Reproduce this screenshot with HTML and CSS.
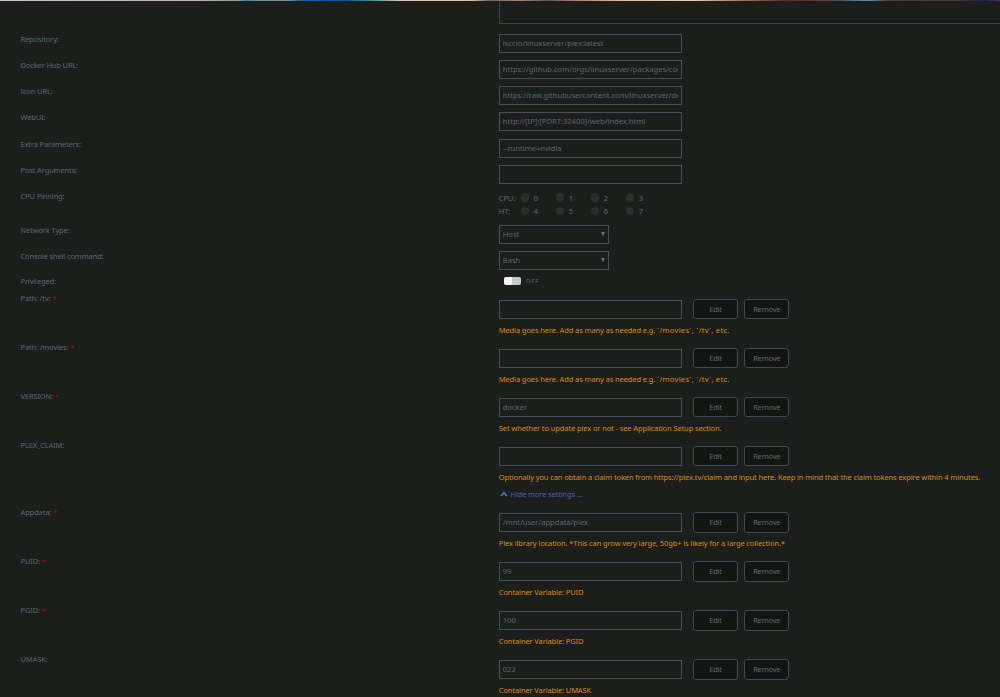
FILE: index.html
```html
<!DOCTYPE html>
<html lang="en">
<head>
  <meta charset="UTF-8">
  <meta name="viewport" content="width=device-width, initial-scale=1.0">
  <title>Update Container</title>
  <link rel="stylesheet" href="styles.css">
</head>
<body>
  <div class="banner"></div>
  <form class="settings">
    <div class="overview"><div class="overview-box"></div></div>

    <div class="row">
      <label>Repository:</label>
      <input type="text" value="lscr.io/linuxserver/plex:latest">
    </div>
    <div class="row">
      <label>Docker Hub URL:</label>
      <input type="text" value="https://github.com/orgs/linuxserver/packages/container/package/plex">
    </div>
    <div class="row">
      <label>Icon URL:</label>
      <input type="text" value="https://raw.githubusercontent.com/linuxserver/docker-templates/master/plex.png">
    </div>
    <div class="row">
      <label>WebUI:</label>
      <input type="text" value="http://[IP]:[PORT:32400]/web/index.html">
    </div>
    <div class="row">
      <label>Extra Parameters:</label>
      <input type="text" value="--runtime=nvidia">
    </div>
    <div class="row">
      <label>Post Arguments:</label>
      <input type="text" value="">
    </div>

    <div class="row cpu-row">
      <label>CPU Pinning:</label>
      <div class="cpus">
        <span>CPU:</span><i class="check"></i><span>0</span><i class="check"></i><span>1</span><i class="check"></i><span>2</span><i class="check"></i><span>3</span>
        <span>HT:</span><i class="check"></i><span>4</span><i class="check"></i><span>5</span><i class="check"></i><span>6</span><i class="check"></i><span>7</span>
      </div>
    </div>

    <div class="row select-row">
      <label>Network Type:</label>
      <div class="select"><span>Host</span><i class="arrow"></i></div>
    </div>
    <div class="row select-row">
      <label>Console shell command:</label>
      <div class="select"><span>Bash</span><i class="arrow"></i></div>
    </div>
    <div class="row toggle-row">
      <label>Privileged:</label>
      <div class="toggle"><i class="switch"></i><span>OFF</span></div>
    </div>

    <div class="row config">
      <label>Path: /tv: <b>*</b></label>
      <div class="field">
        <div class="controls"><input type="text" value=""><button type="button">Edit</button><button type="button">Remove</button></div>
        <p class="desc">Media goes here. Add as many as needed e.g. <span class="paths">`/movies`, `/tv`, etc.</span></p>
      </div>
    </div>
    <div class="row config">
      <label>Path: /movies: <b>*</b></label>
      <div class="field">
        <div class="controls"><input type="text" value=""><button type="button">Edit</button><button type="button">Remove</button></div>
        <p class="desc">Media goes here. Add as many as needed e.g. <span class="paths">`/movies`, `/tv`, etc.</span></p>
      </div>
    </div>
    <div class="row config">
      <label>VERSION: <b>*</b></label>
      <div class="field">
        <div class="controls"><input type="text" value="docker"><button type="button">Edit</button><button type="button">Remove</button></div>
        <p class="desc">Set whether to update plex or not - see Application Setup section.</p>
      </div>
    </div>
    <div class="row config">
      <label>PLEX_CLAIM:</label>
      <div class="field">
        <div class="controls"><input type="text" value=""><button type="button">Edit</button><button type="button">Remove</button></div>
        <p class="desc">Optionally you can obtain a claim token from https://plex.tv/claim and input here. Keep in mind that the claim tokens expire within 4 minutes.</p>
      </div>
    </div>

    <div class="more">
      <svg class="chevron" viewBox="0 0 8 6"><path d="M1 4.8 L4 1.8 L7 4.8" /></svg>
      <span>Hide more settings ...</span>
    </div>

    <div class="row config">
      <label>Appdata: <b>*</b></label>
      <div class="field">
        <div class="controls"><input type="text" value="/mnt/user/appdata/plex"><button type="button">Edit</button><button type="button">Remove</button></div>
        <p class="desc">Plex library location. *This can grow very large, 50gb+ is likely for a large collection.*</p>
      </div>
    </div>
    <div class="row config">
      <label>PUID: <b>*</b></label>
      <div class="field">
        <div class="controls"><input type="text" value="99"><button type="button">Edit</button><button type="button">Remove</button></div>
        <p class="desc">Container Variable: PUID</p>
      </div>
    </div>
    <div class="row config">
      <label>PGID: <b>*</b></label>
      <div class="field">
        <div class="controls"><input type="text" value="100"><button type="button">Edit</button><button type="button">Remove</button></div>
        <p class="desc">Container Variable: PGID</p>
      </div>
    </div>
    <div class="row config">
      <label>UMASK:</label>
      <div class="field">
        <div class="controls"><input type="text" value="022"><button type="button">Edit</button><button type="button">Remove</button></div>
        <p class="desc">Container Variable: UMASK</p>
      </div>
    </div>
  </form>
</body>
</html>
```
FILE: styles.css
```css
* {
  box-sizing: border-box;
}

body {
  margin: 0;
  height: 697px;
  overflow: hidden;
  background-color: #1c1e1b;
  color: #5a6776;
  font-family: "Noto Sans", sans-serif;
  font-size: 7.5px;
  letter-spacing: -0.14px;
  line-height: 10px;
}

.banner {
  height: 1.4px;
  background: linear-gradient(to right, #c8c3cc 0, #b9b0b5 200px, #8f9a94 238px, #3c86a8 246px, #7f9095 262px, #7f9095 288px, #1e62a8 300px, #0f5296 345px, #4a9a9a 375px, #e0c4b0 400px, #e0c4b0 470px, #6e6663 490px, #b08078 520px, #5a5552 548px, #a87468 570px, #e0b8a0 620px, #e8cfbf 690px, #a87563 740px, #5c2826 790px, #6a3a36 820px, #405060 840px, #5a94a8 867px, #503a3a 890px, #4a3434 960px, #201c50 985px, #503060 1000px);
}

.overview {
  height: 32.5px;
  padding-left: 499px;
}

.overview-box {
  height: 22.4px;
  border-left: 1px solid #3d4651;
  border-bottom: 1px solid #3d4651;
}

.row {
  display: flex;
  height: 26.2px;
  padding-left: 20.5px;
}

.row label {
  width: 478.3px;
  flex: none;
}

.row label b {
  color: #a00c10;
  font-weight: normal;
}

input {
  width: 183px;
  height: 19px;
  margin: 0;
  padding: 0 3px 1px;
  border: 1px solid #434f5c;
  border-radius: 0;
  background: none;
  color: inherit;
  font: inherit;
  font-size: 7.6px;
  letter-spacing: -0.03px;
  outline: none;
}

.cpu-row {
  height: 34.1px;
}

.cpus {
  display: grid;
  grid-template-columns: 22px 13px 22px 13px 22px 13px 22px 13px 22px;
  grid-auto-rows: 13.2px;
  align-content: start;
  align-items: center;
}

.check {
  width: 8.5px;
  height: 8.5px;
  border-radius: 50%;
  background-color: #2c2e2b;
}

.select-row {
  height: 25.8px;
}

.select {
  display: flex;
  align-items: center;
  justify-content: space-between;
  width: 110px;
  height: 19px;
  padding: 0 3px 1px;
  border: 1px solid #434f5c;
  letter-spacing: 0;
}

.arrow {
  border: 2px solid transparent;
  border-top: 4px solid #5f6d7c;
  border-bottom: 0;
}

.toggle-row {
  height: 17.2px;
}

.row.toggle-row label {
  margin-top: -0.8px;
}

.toggle {
  display: flex;
  align-items: center;
  height: 8px;
  padding-left: 5.5px;
  font-size: 6px;
  letter-spacing: 0.8px;
}

.switch {
  width: 16.5px;
  height: 8px;
  margin-right: 5px;
  border-radius: 2px;
  background: linear-gradient(to right, #f7f7f7 50%, #c8c8c8 50%);
}

.config {
  height: 49px;
}

.row.config label {
  margin-top: -0.6px;
}

.controls {
  display: flex;
  align-items: center;
  padding-top: 5px;
}

button {
  height: 20.5px;
  width: 44.5px;
  margin: 0 0 0 11.5px;
  padding: 0 0 1px;
  border: 1px solid #3d4954;
  border-radius: 3px;
  background-color: #131610;
  color: inherit;
  font: inherit;
  letter-spacing: -0.2px;
}

button + button {
  margin-left: 6.7px;
}

.desc {
  margin: 5.5px 0 0;
  color: #dc8c0a;
  letter-spacing: -0.11px;
  white-space: nowrap;
}

.paths {
  letter-spacing: 0.3px;
}

.more {
  display: flex;
  align-items: center;
  height: 9px;
  margin: 0 0 8.3px;
  padding-left: 500px;
  color: #4562a8;
}

.chevron {
  width: 8px;
  height: 6px;
  margin-right: 2.5px;
  fill: none;
  stroke: #4a6ebc;
  stroke-width: 1.7;
}
```
